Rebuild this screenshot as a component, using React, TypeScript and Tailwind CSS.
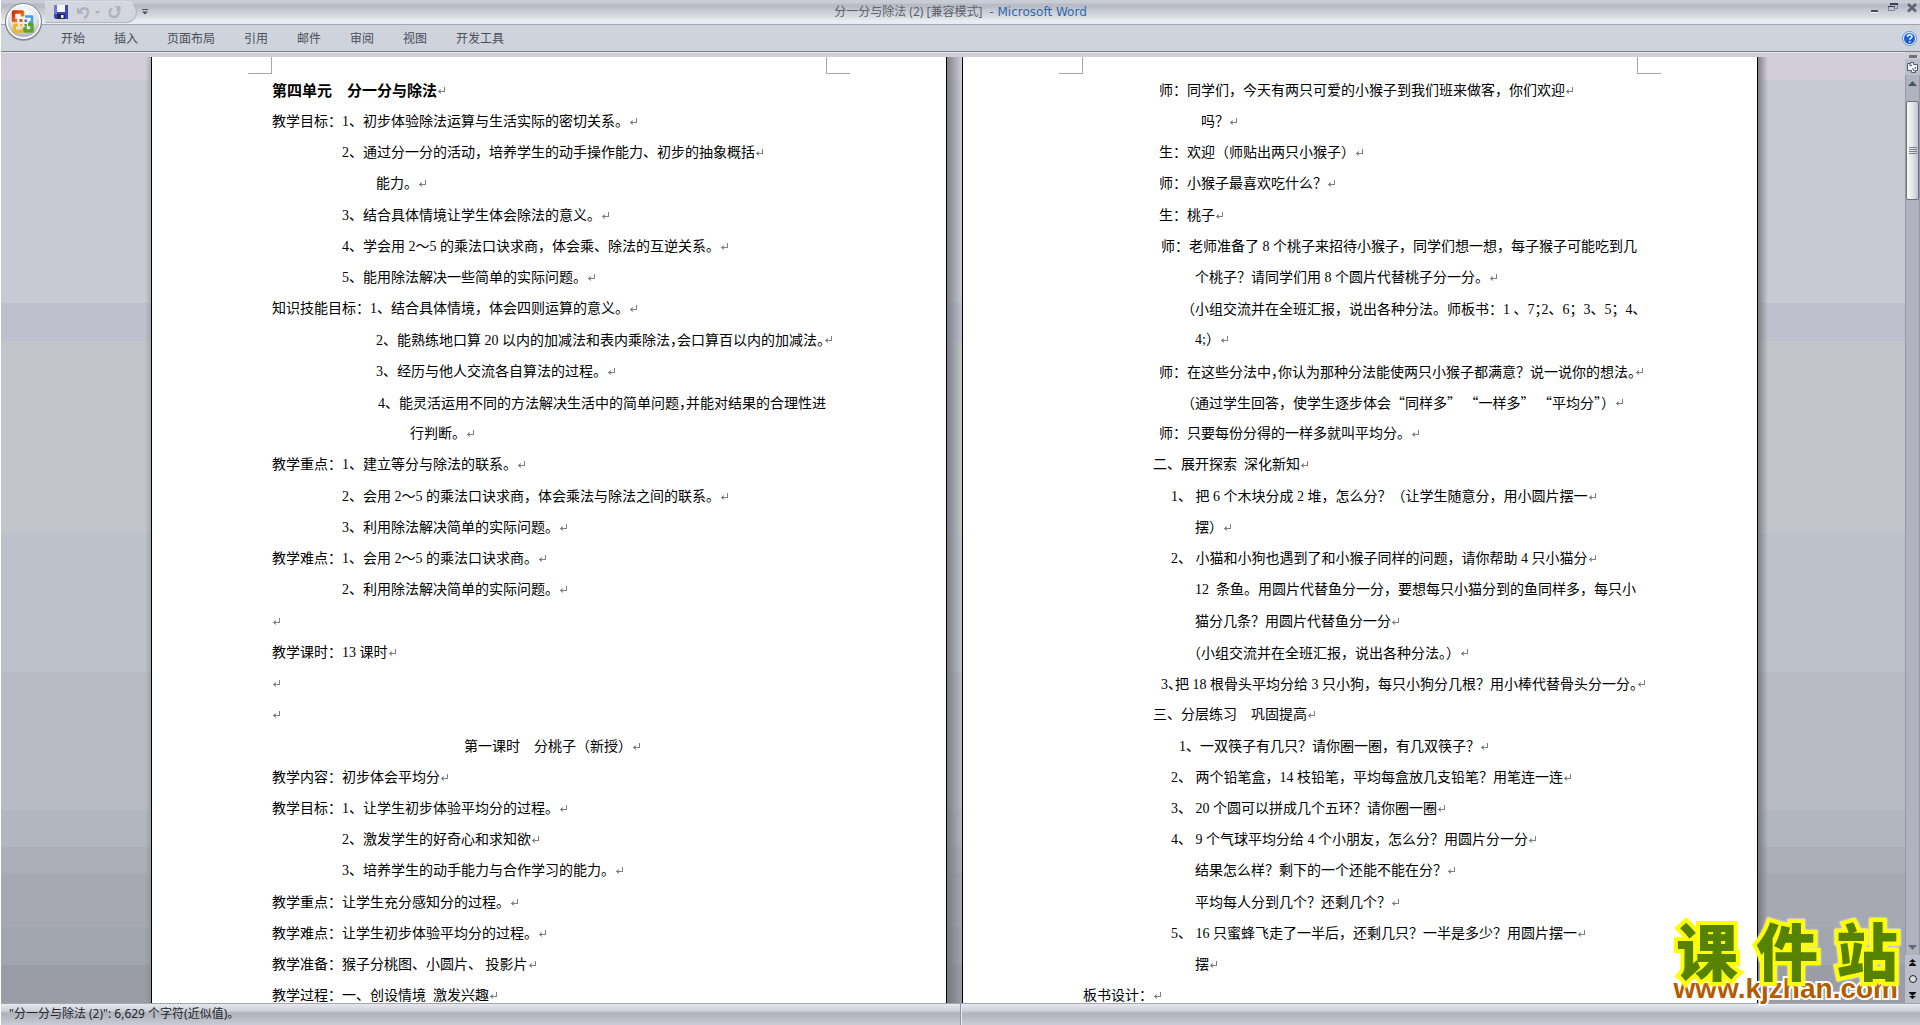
import React from 'react';
import clsx from 'clsx';

interface DocLine {
    text: string;
    indent?: string;
    bold?: boolean;
    // soft wrapped lines carry no paragraph mark
    wrap?: boolean;
}

const tabs = ['开始', '插入', '页面布局', '引用', '邮件', '审阅', '视图', '开发工具'];

// A "^" after a punctuation mark sets it half width
const leftPage: DocLine[] = [
    { text: '第四单元　分一分与除法', bold: true },
    { text: '教学目标：1、初步体验除法运算与生活实际的密切关系。' },
    { text: '2、通过分一分的活动，培养学生的动手操作能力、初步的抽象概括', indent: 'pl-[70px]' },
    { text: '能力。', indent: 'pl-[104px]' },
    { text: '3、结合具体情境让学生体会除法的意义。', indent: 'pl-[70px]' },
    { text: '4、学会用 2～5 的乘法口诀求商，体会乘、除法的互逆关系。', indent: 'pl-[70px]' },
    { text: '5、能用除法解决一些简单的实际问题。', indent: 'pl-[70px]' },
    { text: '知识技能目标：1、结合具体情境，体会四则运算的意义。' },
    { text: '2、能熟练地口算 20 以内的加减法和表内乘除法，^会口算百以内的加减法。^', indent: 'pl-[104px]' },
    { text: '3、经历与他人交流各自算法的过程。', indent: 'pl-[104px]' },
    { text: '4、能灵活运用不同的方法解决生活中的简单问题，^并能对结果的合理性进', indent: 'pl-[106px]', wrap: true },
    { text: '行判断。', indent: 'pl-[138px]' },
    { text: '教学重点：1、建立等分与除法的联系。' },
    { text: '2、会用 2～5 的乘法口诀求商，体会乘法与除法之间的联系。', indent: 'pl-[70px]' },
    { text: '3、利用除法解决简单的实际问题。', indent: 'pl-[70px]' },
    { text: '教学难点：1、会用 2～5 的乘法口诀求商。' },
    { text: '2、利用除法解决简单的实际问题。', indent: 'pl-[70px]' },
    { text: '' },
    { text: '教学课时：13 课时' },
    { text: '' },
    { text: '' },
    { text: '第一课时　分桃子（新授）', indent: 'pl-[192px]' },
    { text: '教学内容：初步体会平均分' },
    { text: '教学目标：1、让学生初步体验平均分的过程。' },
    { text: '2、激发学生的好奇心和求知欲', indent: 'pl-[70px]' },
    { text: '3、培养学生的动手能力与合作学习的能力。', indent: 'pl-[70px]' },
    { text: '教学重点：让学生充分感知分的过程。' },
    { text: '教学难点：让学生初步体验平均分的过程。' },
    { text: '教学准备：猴子分桃图、小圆片、 投影片' },
    { text: '教学过程：一、创设情境  激发兴趣' }
];

const rightPage: DocLine[] = [
    { text: '师：同学们，今天有两只可爱的小猴子到我们班来做客，你们欢迎', indent: 'pl-[76px]' },
    { text: '吗？', indent: 'pl-[118px]' },
    { text: '生：欢迎（师贴出两只小猴子）', indent: 'pl-[76px]' },
    { text: '师：小猴子最喜欢吃什么？', indent: 'pl-[76px]' },
    { text: '生：桃子', indent: 'pl-[76px]' },
    { text: '师：老师准备了 8 个桃子来招待小猴子，同学们想一想，每子猴子可能吃到几', indent: 'pl-[78px]', wrap: true },
    { text: '个桃子？请同学们用 8 个圆片代替桃子分一分。', indent: 'pl-[112px]' },
    { text: '（小组交流并在全班汇报，说出各种分法。师板书：1 、7；^2、6；3、5；4、', indent: 'pl-[98px]', wrap: true },
    { text: '4;）', indent: 'pl-[112px]' },
    { text: '师：在这些分法中，^你认为那种分法能使两只小猴子都满意？说一说你的想法。^', indent: 'pl-[76px]' },
    { text: '（通过学生回答，使学生逐步体会“同样多” “一样多” “平均分”^）', indent: 'pl-[98px]' },
    { text: '师：只要每份分得的一样多就叫平均分。', indent: 'pl-[76px]' },
    { text: '二、展开探索  深化新知', indent: 'pl-[70px]' },
    { text: '1、 把 6 个木块分成 2 堆，怎么分？（让学生随意分，用小圆片摆一', indent: 'pl-[88px]' },
    { text: '摆）', indent: 'pl-[112px]' },
    { text: '2、 小猫和小狗也遇到了和小猴子同样的问题，请你帮助 4 只小猫分', indent: 'pl-[88px]' },
    { text: '12  条鱼。用圆片代替鱼分一分，要想每只小猫分到的鱼同样多，每只小', indent: 'pl-[112px]', wrap: true },
    { text: '猫分几条？用圆片代替鱼分一分', indent: 'pl-[112px]' },
    { text: '（小组交流并在全班汇报，说出各种分法。^）', indent: 'pl-[104px]' },
    { text: '3、^把 18 根骨头平均分给 3 只小狗，每只小狗分几根？用小棒代替骨头分一分。^', indent: 'pl-[78px]' },
    { text: '三、分层练习　巩固提高', indent: 'pl-[70px]' },
    { text: '1、一双筷子有几只？请你圈一圈，有几双筷子？', indent: 'pl-[96px]' },
    { text: '2、 两个铅笔盒，14 枝铅笔，平均每盒放几支铅笔？用笔连一连', indent: 'pl-[88px]' },
    { text: '3、 20 个圆可以拼成几个五环？请你圈一圈', indent: 'pl-[88px]' },
    { text: '4、 9 个气球平均分给 4 个小朋友，怎么分？用圆片分一分', indent: 'pl-[88px]' },
    { text: '结果怎么样？剩下的一个还能不能在分？', indent: 'pl-[112px]' },
    { text: '平均每人分到几个？还剩几个？', indent: 'pl-[112px]' },
    { text: '5、 16 只蜜蜂飞走了一半后，还剩几只？一半是多少？用圆片摆一', indent: 'pl-[88px]' },
    { text: '摆', indent: 'pl-[112px]' },
    { text: '板书设计：' }
];

const ParagraphMark = () => (
    <svg className="w-2 h-2 shrink-0" viewBox="0 0 8 8" fill="none" stroke="#808080" shapeRendering="crispEdges">
        <path d="M7.5 0v5M1 4.5h6M2.5 3v3" />
        <path d="M3.5 2v5" strokeOpacity="0.6" />
    </svg>
);

const renderText = (text: string) =>
    text.split(/(.\^|[“”])/).map((part, index) => {
        if (part.endsWith('^')) {
            return (
                <span key={index} className="font-['Noto_Sans_CJK_SC',sans-serif] [font-feature-settings:'halt']">
                    {part[0]}
                </span>
            );
        }
        if (part === '“' || part === '”') {
            return <span key={index} className="font-['Noto_Sans_CJK_SC',sans-serif]">{part}</span>;
        }
        return part;
    });

const CropMark: React.FC<{ side: 'left' | 'right' }> = ({ side }) => (
    <div
        className={clsx(
            'w-6 h-[17px] border-b border-[#a5a5b3]',
            side === 'left' ? 'border-r' : 'border-l'
        )}
    />
);

const Page: React.FC<{ lines: DocLine[] }> = ({ lines }) => (
    <article className="flex flex-col w-[796px] shrink-0 bg-white border-x border-black overflow-hidden">
        <div className="flex justify-between px-24 shrink-0">
            <CropMark side="left" />
            <CropMark side="right" />
        </div>
        <div className="flex flex-col flex-1 pt-[1px] -mb-[9px] pl-[120px] text-sm leading-5 text-black">
            {lines.map((line, index) => (
                <p
                    key={index}
                    className={clsx(
                        'flex flex-1 items-center whitespace-pre',
                        line.indent,
                        line.bold && 'font-bold text-[15px]'
                    )}
                >
                    <span>{renderText(line.text)}</span>
                    {!line.wrap && <ParagraphMark />}
                </p>
            ))}
        </div>
    </article>
);

const OfficeButton = () => (
    <button type="button" aria-label="Office 按钮" className="absolute left-[3px] top-[2px]">
        <svg width="40" height="40" viewBox="0 0 40 40">
            <defs>
                <radialGradient id="orb" cx="50%" cy="30%" r="75%">
                    <stop offset="0" stopColor="#ffffff" />
                    <stop offset="0.55" stopColor="#e2e3e8" />
                    <stop offset="0.8" stopColor="#b4b6bf" />
                    <stop offset="1" stopColor="#f6f6fa" />
                </radialGradient>
                <linearGradient id="red" x1="0" y1="0" x2="1" y2="1">
                    <stop offset="0" stopColor="#cf2f08" />
                    <stop offset="1" stopColor="#f58b20" />
                </linearGradient>
            </defs>
            <circle cx="19.5" cy="20.5" r="18.5" fill="#6f727b" opacity="0.6" />
            <circle cx="19.5" cy="19.5" r="18" fill="url(#orb)" stroke="#7e818a" />
            <circle cx="19.5" cy="19.5" r="16.5" fill="none" stroke="#ffffff" strokeWidth="1.5" />
            <g fill="none" strokeWidth="3" strokeLinejoin="round">
                <path d="M13 18.500h-3.500v-8.500h9v4.500" stroke="url(#red)" strokeWidth="3.500" />
                <path d="M21 14.500h7v6h-3" stroke="#4b9bdc" strokeWidth="2.500" />
                <path d="M14 23h-3.500v6.500h7.500v-3" stroke="#f2b51c" />
                <path d="M24 22.500h4v6.500h-7v-4" stroke="#5da22d" strokeWidth="3.500" />
            </g>
            <g>
                <rect x="15.500" y="17" width="3" height="3" fill="#e8531a" />
                <rect x="20.500" y="17.500" width="2.500" height="2.500" fill="#2e7cc9" />
                <rect x="16" y="22" width="2.500" height="2.500" fill="#f4bd25" />
                <rect x="20.500" y="22" width="2.500" height="2.500" fill="#55a02a" />
            </g>
        </svg>
    </button>
);

const QuickAccessBar = () => (
    <div className="absolute left-11 top-[1px] flex items-center h-[22px]">
        <div className="flex items-center h-full w-[92px] pl-2 rounded-r-full rounded-tl-[14px] border border-[#b4b7c0] border-t-[#dcdfe6] border-l-transparent bg-[#d3d6dd]">
            <button type="button" aria-label="保存">
                <svg width="14" height="14" viewBox="0 0 14 14">
                    <path d="M0 0h14v14H1.500L0 12.500z" fill="#3c46b4" />
                    <path d="M0 0h3v9H0z" fill="#6f7ad8" />
                    <rect x="3" y="0" width="8" height="7" fill="#f4f6ff" />
                    <rect x="3" y="9" width="8" height="5" fill="#20265c" />
                    <rect x="7" y="10" width="2.500" height="3" fill="#f4f6ff" />
                </svg>
            </button>
            <button type="button" aria-label="撤消" className="ml-[9px]">
                <svg width="13" height="13" viewBox="0 0 13 13" fill="none" stroke="#b0b3bd" strokeWidth="2.500">
                    <path d="M3 4.500C7 1 11 2 11 6c0 3-2 5-4 6" />
                    <path d="M0 1v7h7z" fill="#b0b3bd" stroke="none" />
                </svg>
            </button>
            <svg className="ml-[5px]" width="5" height="3" viewBox="0 0 5 3" fill="#a9acb6">
                <path d="M0 0h5L2.500 3z" />
            </svg>
            <button type="button" aria-label="恢复" className="ml-2">
                <svg width="13" height="13" viewBox="0 0 13 13" fill="none" stroke="#b0b3bd" strokeWidth="2.500">
                    <path d="M4 2.500C0 5 1.500 11 6 11s6-5 3-8" />
                    <path d="M6.500 0h6v6z" fill="#b0b3bd" stroke="none" />
                </svg>
            </button>
        </div>
        <button type="button" aria-label="自定义快速访问工具栏" className="ml-[5px]">
            <svg width="6" height="6" viewBox="0 0 6 6" fill="#4d5059">
                <path d="M0 0h6v1H0zM0 2.500h6L3 5.500z" />
            </svg>
        </button>
    </div>
);

const WindowControls = () => (
    <div className="absolute right-[3px] top-[3px] flex items-start gap-[9px]">
        <button type="button" aria-label="最小化">
            <svg width="9" height="10" viewBox="0 0 9 10" shapeRendering="crispEdges">
                <path d="M1 7h7v2H1z" fill="#454a55" />
                <path d="M1 9h7v1H1z" fill="#f4f5f9" />
            </svg>
        </button>
        <button type="button" aria-label="还原">
            <svg width="10" height="9" viewBox="0 0 10 9" fill="none" stroke="#7b87a0" shapeRendering="crispEdges">
                <path d="M2.500 3V1.500h7v4H7" />
                <path d="M.500 3v4.500h6V3" />
                <path d="M2 1h8" stroke="#3b404b" strokeWidth="2" />
                <path d="M0 3.500h7" stroke="#3b404b" />
            </svg>
        </button>
        <button type="button" aria-label="关闭">
            <svg width="10" height="10" viewBox="0 0 10 10" fill="none" stroke="#5a6376" strokeWidth="2.500">
                <path d="M1 1l8 7.500M9 1L1 8.500" />
            </svg>
        </button>
    </div>
);

const HelpButton = () => (
    <button type="button" aria-label="帮助" className="mr-[3px]">
        <svg width="15" height="15" viewBox="0 0 15 15">
            <circle cx="7.500" cy="7.500" r="7" fill="#e9f2ff" stroke="#5f91d2" />
            <circle cx="7.500" cy="7.500" r="5.500" fill="#1f5fd6" />
            <path d="M5.500 6c0-3 4.500-2.800 4.500-.300 0 1.500-2.300 1.500-2.300 3M7.700 10v1.500" fill="none" stroke="#ffffff" strokeWidth="1.500" />
        </svg>
    </button>
);

const ScrollColumn = () => (
    <aside className="flex flex-col w-[15px] shrink-0 bg-[#bcbfc9]">
        <div className="h-[7px] shrink-0 bg-[#d0cfd8] pt-[3px] pl-1">
            <div className="w-2 h-[3px] bg-[#6f727b]" />
        </div>
        <button type="button" aria-label="标尺" className="flex items-center justify-center h-4 shrink-0">
            <svg width="13" height="13" viewBox="0 0 13 13" fill="#f4f5fa" stroke="#4b5a78">
                <path d="M1.500 2.500h3v-1h3v2h4v6h-2v2h-4v-2h-4z" />
                <path d="M4 3v2l2-1M7 7v2l2 1M10 6l-1 2" />
            </svg>
        </button>
        <div className="flex flex-col flex-1 border-x border-[#9699a3] bg-[#b0b3bd]">
            <button type="button" aria-label="向上滚动" className="flex justify-center h-[26px] shrink-0 pt-[6px]">
                <svg width="9" height="5" viewBox="0 0 9 5" fill="#4a5468">
                    <path d="M0 5h9L4.500 0z" />
                </svg>
            </button>
            <div className="flex flex-col items-center justify-center gap-[1px] h-[99px] shrink-0 rounded-[2px] border border-[#6f727b] bg-linear-to-r from-[#fdfaf2] via-[#e4e5ee] to-[#c0c4ce]">
                <div className="w-2 h-[1px] bg-[#7b7e88]" />
                <div className="w-2 h-[1px] bg-[#7b7e88]" />
                <div className="w-2 h-[1px] bg-[#7b7e88]" />
                <div className="w-2 h-[1px] bg-[#7b7e88]" />
            </div>
            <button type="button" aria-label="向下滚动" className="flex justify-center h-[10px] mt-auto">
                <svg width="9" height="5" viewBox="0 0 9 5" fill="#5f6a80">
                    <path d="M0 0h9L4.500 5z" />
                </svg>
            </button>
        </div>
        <div className="flex flex-col items-center justify-around h-12 shrink-0">
            <button type="button" aria-label="前一页">
                <svg className="block" width="7" height="7" viewBox="0 0 7 7">
                    <path d="M0 3h7L3.500 0zM0 6h7L3.500 3zM0 6h7v1H0z" fill="#111111" />
                </svg>
            </button>
            <button type="button" aria-label="选择浏览对象">
                <svg className="block" width="8" height="8" viewBox="0 0 8 8">
                    <circle cx="4" cy="4" r="3.500" fill="#d9dbe3" stroke="#222222" />
                </svg>
            </button>
            <button type="button" aria-label="下一页">
                <svg className="block" width="7" height="7" viewBox="0 0 7 7">
                    <path d="M0 0h7v1H0zM0 1h7L3.500 4zM0 4h7L3.500 7z" fill="#111111" />
                </svg>
            </button>
        </div>
    </aside>
);

const Watermark = () => (
    <div className="absolute right-[22px] bottom-6 flex flex-col items-end font-bold pointer-events-none">
        <div className="flex gap-[18px] text-[62px] leading-[56px] font-black font-['Noto_Sans_CJK_SC',sans-serif] text-[#578200] [-webkit-text-stroke:8px_#ffff00] [paint-order:stroke_fill] drop-shadow-[0_0_1px_#ffffff]">
            <span>课</span>
            <span>件</span>
            <span>站</span>
        </div>
        <a
            href="#"
            className="text-[28px] leading-6 font-['Liberation_Sans',sans-serif] text-[#b35b00] [-webkit-text-stroke:4px_#ffffff] [paint-order:stroke_fill] pointer-events-auto"
        >
            www.kjzhan.com
        </a>
    </div>
);

const App: React.FC = () => {
    return (
        <div
            lang="zh-CN"
            className="relative flex flex-col h-screen overflow-hidden border-l border-white bg-[#cfd3dc] font-['Liberation_Serif','Noto_Sans_CJK_SC',serif]"
        >
            {/* Title bar */}
            <header className="relative shrink-0">
                <div className="relative h-[25px] border-b border-[#a2a5ae] bg-[linear-gradient(#c8ccd5_0_3px,#b9bcc6_4px_7px,#c3c6cf_9px,#d3d6dd_15px,#e0e3e7_19px,#e8ebf5_20px)]">
                    <h1 className="text-center text-xs leading-6 whitespace-pre font-['Noto_Sans','Noto_Sans_CJK_SC',sans-serif] text-[#5c616b]">
                        分一分与除法 (2) [兼容模式]{' '}
                        <span className="font-['DejaVu_Sans',sans-serif] text-[#2f67ad]"> - Microsoft Word</span>
                    </h1>
                    <QuickAccessBar />
                    <WindowControls />
                </div>

                {/* Ribbon tabs */}
                <nav className="flex items-center justify-between h-[27px] pl-[60px] border-b border-[#7e8189]">
                    <ul className="flex gap-[29px] text-xs leading-4 font-['Noto_Sans_CJK_SC',sans-serif] text-[#4a4e58]">
                        {tabs.map(tab => (
                            <li key={tab}>
                                <button type="button">{tab}</button>
                            </li>
                        ))}
                    </ul>
                    <HelpButton />
                </nav>
                <OfficeButton />
            </header>

            {/* Document area */}
            <main className="flex flex-1 min-h-0">
                <div className="flex flex-col flex-1 min-w-0">
                    <div className="h-[5px] shrink-0 border-t border-[#e2e4ea] bg-[#d0cfd8]" />
                    <div className="flex flex-1 min-h-0 justify-center pl-[3px] bg-[linear-gradient(#d1ced9_0_2.4%,#c7cad2_2.4%_26%,#c0bfce_26%_30%,#c3c5cd_30%_50.4%,#bdc2ca_50.4%_65%,#b8bbc4_65%_79.6%,#b2b6be_79.6%_83.5%,#acafb8_83.5%_86.3%,#a7a9b2_86.3%_92%,#a1a5ad_92%_96%,#9a9da6_96%)]">
                        <div className="w-[6px] shrink-0 bg-linear-to-r from-transparent to-[#7c7f88]/40" />
                        <Page lines={leftPage} />
                        <div className="w-[15px] shrink-0 bg-linear-to-r from-[#6d6f76]/80 to-transparent" />
                        <Page lines={rightPage} />
                        <div className="w-[10px] -mr-1 shrink-0 bg-linear-to-r from-[#6d6f76]/80 to-transparent" />
                    </div>
                </div>
                <ScrollColumn />
            </main>

            {/* Status bar */}
            <footer className="grid grid-cols-2 h-[22px] shrink-0 border-t border-[#a5a6b0] bg-[linear-gradient(#e6e8ee,#cdd0d8_7px,#b1b3bb_9px,#b8bac2_13px,#c9ccd6)] text-xs leading-5 font-['Noto_Sans','Noto_Sans_CJK_SC',sans-serif] text-[#24262c]">
                <p className="pl-2 border-r border-[#8f929c]">"分一分与除法 (2)": 6,629 个字符(近似值)。</p>
                <div className="border-l border-[#eceef4]" />
            </footer>

            <Watermark />
        </div>
    );
};

export default App;
